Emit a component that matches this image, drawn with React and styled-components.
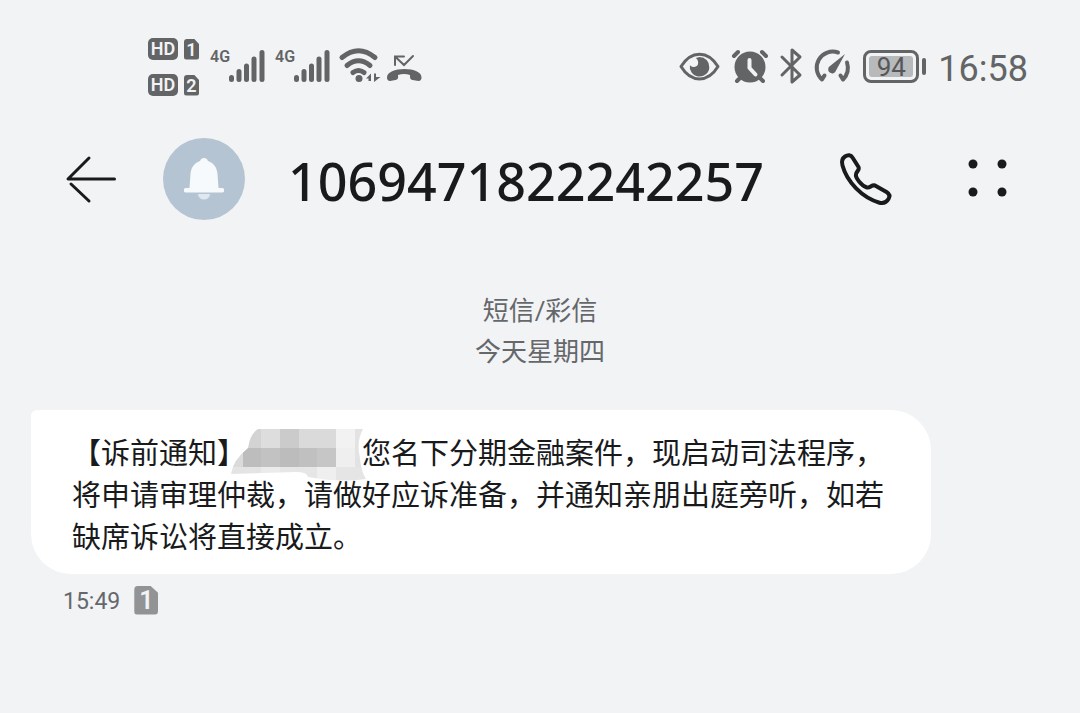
import styled, { createGlobalStyle } from "styled-components";

const GlobalStyle = createGlobalStyle`
    body {
        margin: 0;
        background-color: #F1F3F5;
        font-family: Roboto, "Noto Sans CJK SC", sans-serif;
        color: #191A1C;
    }
`

const StatusBar = styled.div`
    display: flex;
    align-items: center;
    justify-content: space-between;
    padding: 36px 52px 0 148px;
    color: #636466;
`

const StatusGroup = styled.div`
    display: flex;
    align-items: center;
    gap: ${({gap}) => gap}px;
`

const SimList = styled.div`
    display: flex;
    flex-direction: column;
    gap: 14px;
    padding: 2px 0 0;
`

const SimRow = styled.div`
    display: flex;
    align-items: center;
    gap: 6px;
`

const HdBadge = styled.span`
    width: 30px;
    height: 22px;
    border-radius: 5px;
    background-color: #636466;
    color: #F1F3F5;
    font-size: 18px;
    font-weight: 600;
    line-height: 22px;
    text-align: center;
`

const SimBadge = styled.span`
    width: ${({large}) => (large ? 24 : 15)}px;
    height: ${({large}) => (large ? 29 : 21)}px;
    line-height: ${({large}) => (large ? 29 : 21)}px;
    border-radius: ${({large}) => (large ? 4 : 3)}px;
    clip-path: polygon(0 0, 66% 0, 100% 26%, 100% 100%, 0 100%);
    background-color: ${({large}) => (large ? "#929395" : "#636466")};
    color: #F1F3F5;
    font-size: ${({large}) => (large ? 25 : 18)}px;
    font-weight: 600;
    text-align: center;
`

const Network = styled.div`
    display: flex;
    align-items: flex-start;
`

const NetworkLabel = styled.span`
    width: 18px;
    font-size: 16px;
    font-weight: 600;
    line-height: 18px;
`

const Icon = styled.svg`
    display: block;
    flex: none;
    overflow: visible;
    fill: none;
    stroke: currentColor;
    stroke-linecap: round;
    stroke-linejoin: round;
`

const Battery = styled.div`
    display: flex;
    align-items: center;
    gap: 3px;

    &::after {
        content: "";
        width: 4px;
        height: 17px;
        border-radius: 2px;
        background-color: #636466;
    }
`

const BatteryBody = styled.div`
    box-sizing: border-box;
    width: 56px;
    height: 33px;
    padding: 3px;
    border: 3px solid #636466;
    border-radius: 8px;
`

const BatteryLevel = styled.div`
    width: 44px;
    height: 21px;
    border-radius: 3px;
    background-color: #B8B9BB;
    color: #56575A;
    font-size: 26px;
    line-height: 22px;
    text-align: center;
`

const Clock = styled.time`
    padding-top: 6px;
    font-size: 36px;
    line-height: 40px;
`

const Header = styled.header`
    display: flex;
    align-items: center;
    padding: 42px 71px 0 66px;
`

const IconButton = styled.button`
    padding: 0;
    border: none;
    background: none;
    color: inherit;
    cursor: pointer;
`

const Avatar = styled.div`
    display: flex;
    align-items: center;
    justify-content: center;
    width: 82px;
    height: 82px;
    margin: 0 43px 0 47px;
    border-radius: 50%;
    background-color: #B5C4D2;
`

const Sender = styled.h1`
    flex: 1;
    margin: 0;
    padding-top: 4px;
    font-family: "Noto Sans", Roboto, sans-serif;
    font-size: 52px;
    font-weight: 500;
    line-height: 78px;
`

const HeaderActions = styled.div`
    display: flex;
    align-items: center;
    gap: 75px;
`

const ThreadInfo = styled.div`
    padding: 71px 0 37px;
    color: #66676A;
    font-size: 26px;
    line-height: 41px;
    text-align: center;
`

const InfoLine = styled.p`
    margin: 0;
`

const Message = styled.article`
    margin: 0 149px 0 31px;
`

const Bubble = styled.p`
    margin: 0;
    padding: 20px 41px 18px;
    border-radius: 6px 40px 40px 40px;
    background-color: #FFFFFF;
    font-family: "Noto Sans CJK SC", sans-serif;
    font-size: 29px;
    line-height: 42px;
    text-spacing-trim: space-all;
`

const Redacted = styled.span`
    display: inline-block;
    position: relative;
    width: 116px;
    height: 42px;
    vertical-align: top;
`

const Mosaic = styled.svg`
    position: absolute;
    top: -2px;
    left: -16px;
`

const MessageFooter = styled.footer`
    display: flex;
    align-items: center;
    gap: 14px;
    padding: 11px 32px;
`

const SentTime = styled.time`
    padding-top: 4px;
    color: #66676A;
    font-size: 23px;
    line-height: 26px;
`

const SignalIcon = () => (
    <Icon width="36" height="36" viewBox="0 0 36 36" strokeWidth="5">
        <path d="M3.500 29.500v2M11 23.500v8M18.500 18v13.500M26 11v20.500M34 4.500v27"/>
    </Icon>
);

const WifiIcon = () => (
    <Icon width="36" height="36" viewBox="0 0 36 36" strokeWidth="5">
        <path d="M2 9.500Q18.500-4 35 9.500M7 17.500Q18.500 8 30 17.500M13 24.500Q18.500 20.500 24 24.500"/>
        <circle cx="19" cy="30.500" r="3.500" fill="currentColor" stroke="none"/>
        <path d="M26 30.500l5-5V33h-2.500v-2.500zM34 25.500h2V29h4.500L34 34z" fill="currentColor" stroke="none"/>
    </Icon>
);

const MissedCallIcon = () => (
    <Icon width="36" height="36" viewBox="0 0 36 36" strokeWidth="2">
        <path d="M8 17V8.500h9M8.500 9l8.500 8 9-9" strokeLinejoin="miter"/>
        <path d="M0 29.500C0 24 8 21 17.500 21s17 3 17 8.500c0 2-1 3.500-3 3.500l-6-1c-2.500-.7-2.500-2-2.500-5-4-1.500-8-1.500-12 0 .3 3 .3 4.300-2.500 5L3 33c-2 0-3-1.500-3-3.500z" fill="currentColor" stroke="none"/>
    </Icon>
);

const EyeIcon = () => (
    <Icon width="41" height="36" viewBox="0 0 41 36" strokeWidth="3">
        <path d="M2 18.500C12 2 29 2 39 18.500 29 35 12 35 2 18.500z"/>
        <path d="M20.500 9a9.800 9.800 0 1 1-9.600 8c2 3 7 2.500 8-.5.9-2.500-.2-5-2-6.500z" fill="currentColor" stroke="none"/>
    </Icon>
);

const AlarmIcon = () => (
    <Icon width="36" height="36" viewBox="0 0 36 36" strokeWidth="4">
        <circle cx="18" cy="19" r="15.500" fill="currentColor" stroke="none"/>
        <path d="M2 8l4-4M34 8l-4-4M5 33l4-4M31 33l-4-4"/>
        <path d="M17.500 12v8l6 6.500" stroke="#F1F3F5"/>
    </Icon>
);

const BluetoothIcon = () => (
    <Icon width="22" height="36" viewBox="0 0 22 36" strokeWidth="3">
        <path d="M2 9l18 18-8 7V2l8 7L2 27"/>
    </Icon>
);

const GaugeIcon = () => (
    <Icon width="37" height="36" viewBox="0 0 37 36" strokeWidth="4">
        <path d="M24 4.500A16 16 0 0 0 8 31.500l2.500-4M33 14.500a17 17 0 0 1-4 17l-2.500-4"/>
        <path d="M31 6L22 22.500a4 4 0 1 1-6-4.500z" fill="currentColor" stroke="none"/>
    </Icon>
);

const BackIcon = () => (
    <Icon width="50" height="50" viewBox="0 0 50 50" strokeWidth="3">
        <path d="M23 4L2 25h46.500M5 30l18 17"/>
    </Icon>
);

const BellIcon = () => (
    <svg width="40" height="44" viewBox="0 0 40 44">
        <path d="M20 1c2 0 3.300 1.200 4 3 6 2 9 7 9.500 13L34.500 31H38a2 2 0 0 1 0 4.500H2A2 2 0 0 1 2 31h3.500l1-14C7 11 10 6 16 4c.7-1.800 2-3 4-3z" fill="#F7FAFD"/>
        <path d="M14 37h12a6 5.500 0 0 1-12 0z" fill="#E0E8EF"/>
    </svg>
);

const PhoneIcon = () => (
    <Icon width="52" height="52" viewBox="0 0 52 52" strokeWidth="4">
        <path d="M5 3.500C8 1.500 11 2 12.500 4.500l6 9.500c1.500 2.500-2 4.500-2.500 7-1 4 6 12 11 13.500 3 1 4.500-3 8-2l11.500 6.500c3 1.800 3.500 4.500 2 7-2 3.300-5 4.800-9 3.700C22 44.500 7 29 2.500 12.500 1.500 9 2 5.500 5 3.500z"/>
    </Icon>
);

const MoreIcon = () => (
    <svg width="42" height="42" viewBox="0 0 42 42" fill="currentColor">
        <circle cx="6" cy="7" r="4.500"/>
        <circle cx="35" cy="7" r="4.500"/>
        <circle cx="6" cy="35" r="4.500"/>
        <circle cx="35" cy="35" r="4.500"/>
    </svg>
);

// [x, y, width, height, color]
const mosaicCells = [
    [0, 1, 31, 19, "#D3D3D3"],
    [31, 1, 19, 19, "#DDDDDD"],
    [50, 1, 19, 19, "#CBCBCB"],
    [69, 1, 37, 19, "#DADADA"],
    [106, 1, 19, 19, "#F2F2F2"],
    [125, 1, 12, 19, "#E3E3E3"],
    [0, 20, 13, 19, "#DADADA"],
    [13, 20, 18, 19, "#BDBDBD"],
    [31, 20, 19, 19, "#C2C2C2"],
    [50, 20, 19, 19, "#BCBCBC"],
    [69, 20, 18, 19, "#C0C0C0"],
    [87, 20, 19, 19, "#C6C6C6"],
    [106, 20, 19, 19, "#EFEFEF"],
    [125, 20, 12, 19, "#E3E3E3"],
    [0, 39, 31, 14, "#E4E4E4"],
    [31, 39, 19, 14, "#EBEBEB"],
    [50, 39, 37, 14, "#E6E6E6"],
    [87, 39, 19, 14, "#EFEFEF"],
    [106, 39, 31, 14, "#E5E5E5"],
];

const MosaicBlock = () => (
    <Mosaic width="137" height="54" viewBox="0 0 137 54" aria-hidden="true">
        <defs>
            <clipPath id="smudge">
                <path d="M28 1H133Q126 14 130 30Q131 43 136 51Q110 55 78 49Q77 44 66 44L1 46Q3 32 18 20Q20 6 28 1z"/>
            </clipPath>
        </defs>
        <g clipPath="url(#smudge)">
            {mosaicCells.map(([x, y, width, height, fill]) => (
                <rect key={`${x}-${y}`} x={x} y={y} width={width} height={height} fill={fill}/>
            ))}
        </g>
    </Mosaic>
);

const App = () => {
    return (
        <>
            <GlobalStyle/>
            <StatusBar>
                <StatusGroup gap={11}>
                    <SimList>
                        <SimRow>
                            <HdBadge>HD</HdBadge>
                            <SimBadge>1</SimBadge>
                        </SimRow>
                        <SimRow>
                            <HdBadge>HD</HdBadge>
                            <SimBadge>2</SimBadge>
                        </SimRow>
                    </SimList>
                    <Network>
                        <NetworkLabel>4G</NetworkLabel>
                        <SignalIcon/>
                    </Network>
                    <Network>
                        <NetworkLabel>4G</NetworkLabel>
                        <SignalIcon/>
                    </Network>
                    <WifiIcon/>
                    <MissedCallIcon/>
                </StatusGroup>
                <StatusGroup gap={12}>
                    <EyeIcon/>
                    <AlarmIcon/>
                    <BluetoothIcon/>
                    <GaugeIcon/>
                    <Battery>
                        <BatteryBody>
                            <BatteryLevel>94</BatteryLevel>
                        </BatteryBody>
                    </Battery>
                    <Clock>16:58</Clock>
                </StatusGroup>
            </StatusBar>

            <Header>
                <IconButton aria-label="返回"><BackIcon/></IconButton>
                <Avatar><BellIcon/></Avatar>
                <Sender>1069471822242257</Sender>
                <HeaderActions>
                    <IconButton aria-label="拨打电话"><PhoneIcon/></IconButton>
                    <IconButton aria-label="更多"><MoreIcon/></IconButton>
                </HeaderActions>
            </Header>

            <main>
                <ThreadInfo>
                    <InfoLine>短信/彩信</InfoLine>
                    <InfoLine>今天星期四</InfoLine>
                </ThreadInfo>
                <Message>
                    <Bubble>
                        【诉前通知】<Redacted><MosaicBlock/></Redacted>
                        <span>您名下分期金融案件，现启动司法程序，</span>
                        <span>将申请审理仲裁，请做好应诉准备，并通知亲朋出庭旁听，如若缺席诉讼将直接成立。</span>
                    </Bubble>
                    <MessageFooter>
                        <SentTime>15:49</SentTime>
                        <SimBadge large>1</SimBadge>
                    </MessageFooter>
                </Message>
            </main>
        </>
    );
};

export default App;
